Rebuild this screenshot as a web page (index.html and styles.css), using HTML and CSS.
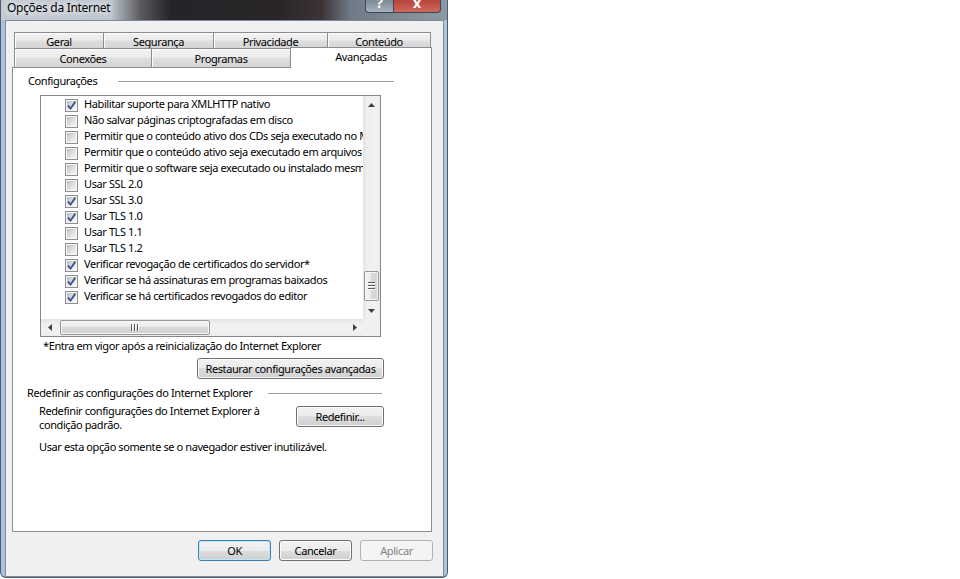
FILE: index.html
```html
<!DOCTYPE html>
<html lang="pt-BR">
<head>
    <meta charset="UTF-8">
    <title>Opções da Internet</title>
    <link rel="stylesheet" href="styles.css">
</head>
<body>
    <div class="window">
        <div class="titlebar">
            <span class="title">Opções da Internet</span>
            <div class="caption">
                <span class="cap-btn help">?</span>
                <span class="cap-btn close">x</span>
            </div>
        </div>
        <div class="client">
            <div class="tab-row back">
                <div class="tab t-geral">Geral</div>
                <div class="tab t-seg">Segurança</div>
                <div class="tab t-priv">Privacidade</div>
                <div class="tab t-cont">Conteúdo</div>
            </div>
            <div class="tab-row front">
                <div class="tab t-conex">Conexões</div>
                <div class="tab t-prog">Programas</div>
                <div class="tab t-avanc selected">Avançadas</div>
            </div>
            <div class="panel">
                <div class="group-head first">
                    <span class="group-label">Configurações</span>
                    <span class="rule"></span>
                </div>
                <div class="listbox">
                    <div class="list-items">
                        <div class="item"><span class="cb"><svg width="11" height="11" viewBox="0 0 11 11"><path d="M2 5.5 L4.5 8.5 L9.5 1.5" fill="none" stroke="#3b5089" stroke-width="1.8"/></svg></span>Habilitar suporte para XMLHTTP nativo</div>
                        <div class="item"><span class="cb"></span>Não salvar páginas criptografadas em disco</div>
                        <div class="item"><span class="cb"></span>Permitir que o conteúdo ativo dos CDs seja executado no Meu Computador*</div>
                        <div class="item"><span class="cb"></span>Permitir que o conteúdo ativo seja executado em arquivos do Meu Computador*</div>
                        <div class="item"><span class="cb"></span>Permitir que o software seja executado ou instalado mesmo se a assinatura for inválida</div>
                        <div class="item"><span class="cb"></span>Usar SSL 2.0</div>
                        <div class="item"><span class="cb"><svg width="11" height="11" viewBox="0 0 11 11"><path d="M2 5.5 L4.5 8.5 L9.5 1.5" fill="none" stroke="#3b5089" stroke-width="1.8"/></svg></span>Usar SSL 3.0</div>
                        <div class="item"><span class="cb"><svg width="11" height="11" viewBox="0 0 11 11"><path d="M2 5.5 L4.5 8.5 L9.5 1.5" fill="none" stroke="#3b5089" stroke-width="1.8"/></svg></span>Usar TLS 1.0</div>
                        <div class="item"><span class="cb"></span>Usar TLS 1.1</div>
                        <div class="item"><span class="cb"></span>Usar TLS 1.2</div>
                        <div class="item"><span class="cb"><svg width="11" height="11" viewBox="0 0 11 11"><path d="M2 5.5 L4.5 8.5 L9.5 1.5" fill="none" stroke="#3b5089" stroke-width="1.8"/></svg></span>Verificar revogação de certificados do servidor*</div>
                        <div class="item"><span class="cb"><svg width="11" height="11" viewBox="0 0 11 11"><path d="M2 5.5 L4.5 8.5 L9.5 1.5" fill="none" stroke="#3b5089" stroke-width="1.8"/></svg></span>Verificar se há assinaturas em programas baixados</div>
                        <div class="item"><span class="cb"><svg width="11" height="11" viewBox="0 0 11 11"><path d="M2 5.5 L4.5 8.5 L9.5 1.5" fill="none" stroke="#3b5089" stroke-width="1.8"/></svg></span>Verificar se há certificados revogados do editor</div>
                    </div>
                    <div class="vscroll">
                        <div class="arrow-btn"><svg width="7" height="4" viewBox="0 0 7 4"><path d="M3.5 0 L7 4 H0 Z" fill="#404040"/></svg></div>
                        <div class="vtrack">
                            <div class="vthumb">
                                <svg width="7" height="8" viewBox="0 0 7 8"><path d="M0 0.5 H7 M0 3.5 H7 M0 6.5 H7" stroke="#5a5a5a"/><path d="M0 1.5 H7 M0 4.5 H7 M0 7.5 H7" stroke="#ffffff"/></svg>
                            </div>
                        </div>
                        <div class="arrow-btn"><svg width="7" height="4" viewBox="0 0 7 4"><path d="M0 0 H7 L3.5 4 Z" fill="#404040"/></svg></div>
                    </div>
                    <div class="hscroll">
                        <div class="arrow-btn"><svg width="4" height="7" viewBox="0 0 4 7"><path d="M0 3.5 L4 0 V7 Z" fill="#404040"/></svg></div>
                        <div class="htrack">
                            <div class="hthumb">
                                <svg width="8" height="7" viewBox="0 0 8 7"><path d="M0.5 0 V7 M3.5 0 V7 M6.5 0 V7" stroke="#5a5a5a"/><path d="M1.5 0 V7 M4.5 0 V7 M7.5 0 V7" stroke="#ffffff"/></svg>
                            </div>
                        </div>
                        <div class="arrow-btn"><svg width="4" height="7" viewBox="0 0 4 7"><path d="M0 0 L4 3.5 L0 7 Z" fill="#404040"/></svg></div>
                    </div>
                    <div class="corner"></div>
                </div>
                <p class="note">*Entra em vigor após a reinicialização do Internet Explorer</p>
                <button class="btn restore">Restaurar configurações avançadas</button>
                <div class="group-head second">
                    <span class="group-label">Redefinir as configurações do Internet Explorer</span>
                    <span class="rule"></span>
                </div>
                <div class="reset-row">
                    <p class="reset-text">Redefinir configurações do Internet Explorer à<br>condição padrão.</p>
                    <button class="btn reset">Redefinir...</button>
                </div>
                <p class="hint">Usar esta opção somente se o navegador estiver inutilizável.</p>
            </div>
            <div class="dialog-buttons">
                <button class="btn default">OK</button>
                <button class="btn">Cancelar</button>
                <button class="btn" disabled>Aplicar</button>
            </div>
        </div>
    </div>
</body>
</html>
```

FILE: styles.css
```css
body {
    margin: 0;
    background: #fff;
    font-family: "Noto Sans", sans-serif;
    font-size: 11px;
    letter-spacing: -0.4px;
    color: #000;
}

/* window frame */
.window {
    width: 448px;
    height: 578px;
    box-sizing: border-box;
    border: 1px solid #4d5c70;
    border-top: none;
    border-radius: 0 0 6px 6px;
    background: linear-gradient(to right, #a9c2dd, #c3d5ea 50%, #aec5de);
    display: flex;
    flex-direction: column;
}
.titlebar {
    height: 20px;
    display: flex;
    justify-content: space-between;
    background: linear-gradient(to right, #c3cad2 0, #bcc4cc 110px, #5a5a5e 140px, #242428 170px, #2a2628 280px, #3b3335 320px, #6f7a86 350px, #8d99a5 446px);
}
.title {
    padding: 1px 0 0 6px;
    line-height: 14px;
    font-size: 12px;
    letter-spacing: -0.3px;
    text-shadow: 0 0 6px #fff, 0 0 10px #fff;
}
.caption {
    display: flex;
    margin-right: 6px;
}
.cap-btn {
    height: 13px;
    box-sizing: border-box;
    border: 1px solid #3d4652;
    border-top: none;
    overflow: hidden;
    color: #fff;
    font-weight: bold;
    font-size: 14px;
    line-height: 6px;
    text-align: center;
    letter-spacing: 0;
}
.help {
    width: 29px;
    border-radius: 0 0 0 4px;
    background: linear-gradient(#7d8995, #a8b2bc);
}
.close {
    width: 47px;
    border-left: none;
    border-radius: 0 0 4px 0;
    background: linear-gradient(#b5443b, #d0685c);
}

.client {
    flex: 1;
    margin: 0 3px 0 4px;
    border: 1px solid #7f8c9c;
    background: #f0f0f0;
    padding-top: 11px;
}

/* tabs */
.tab-row {
    display: flex;
    margin-left: 8px;
}
.tab-row.back {
    height: 16px;
}
.tab-row.front {
    height: 19px;
}
.tab {
    box-sizing: border-box;
    border: 1px solid #898c95;
    border-bottom: none;
    margin-left: -1px;
    background: linear-gradient(#f3f3f3, #ebebeb 45%, #dedede 55%, #d4d4d4);
    box-shadow: inset 1px 1px 0 #fcfcfc;
    text-align: center;
}
.tab:first-child {
    margin-left: 0;
}
.back .tab {
    height: 16px;
    line-height: 16px;
    padding-top: 1px;
}
.front .tab {
    height: 19px;
    line-height: 16px;
    padding-top: 2px;
}
.front .tab.selected {
    height: 21px;
    margin-top: -1px;
    margin-bottom: -1px;
    background: #fff;
    box-shadow: none;
    padding-top: 1px;
    position: relative;
    z-index: 1;
}
.t-geral { width: 90px; }
.t-seg { width: 111px; }
.t-priv { width: 115px; }
.t-cont { width: 104px; }
.t-conex { width: 138px; }
.t-prog { width: 140px; }
.t-avanc { width: 142px; }

.panel {
    margin-left: 6px;
    width: 420px;
    height: 465px;
    box-sizing: border-box;
    border: 1px solid #898c95;
    background: #fff;
}

.group-head {
    display: flex;
    align-items: center;
    height: 14px;
    line-height: 14px;
}
.group-head.first {
    margin: 6px 0 0 15px;
}
.group-head.first .group-label { width: 90px; }
.group-head.first .rule { width: 276px; }
.group-head.second {
    margin: 7px 0 0 14px;
}
.group-head.second .group-label { width: 241px; }
.group-head.second .rule { width: 114px; }
.group-label {
    white-space: nowrap;
}
.rule {
    height: 1px;
    background: #a0a0a0;
}

/* list with scrollbars */
.listbox {
    margin: 7px 0 0 27px;
    width: 341px;
    height: 242px;
    box-sizing: border-box;
    border: 1px solid #828790;
    display: grid;
    grid-template-columns: 322px 17px;
    grid-template-rows: 223px 17px;
}
.list-items {
    overflow: hidden;
}
.item {
    height: 16px;
    line-height: 16px;
    display: flex;
    align-items: center;
    padding-left: 24px;
    white-space: nowrap;
}
.cb {
    width: 13px;
    height: 13px;
    flex-shrink: 0;
    box-sizing: border-box;
    margin: 2px 6px 0 0;
    padding: 1px;
    border: 1px solid #8e8f8f;
    background: linear-gradient(135deg, #b7bcc3, #e4e6e8 60%, #f5f5f6) content-box, #f6f6f6;
    display: grid;
    place-items: center;
}
.cb svg {
    margin: -1px;
}

.vscroll {
    display: grid;
    grid-template-rows: 17px 1fr 17px;
    background: linear-gradient(to right, #e3e3e3, #efefef 25%, #f2f2f2 70%, #ebebeb);
}
.hscroll {
    display: grid;
    grid-template-columns: 17px 1fr 17px;
    background: linear-gradient(#e3e3e3, #efefef 25%, #f2f2f2 70%, #ebebeb);
}
.arrow-btn {
    display: grid;
    place-items: center;
}
.vtrack {
    display: flex;
    flex-direction: column;
    justify-content: flex-end;
    padding-bottom: 1px;
}
.vthumb {
    height: 30px;
    margin: 0 1px;
    box-sizing: border-box;
    border: 1px solid #979797;
    border-radius: 2px;
    background: linear-gradient(to right, #f4f4f4, #e9e9e9 50%, #d9d9d9 50%, #d2d2d2);
    box-shadow: inset 0 0 0 1px #f8f8f8;
    display: grid;
    place-items: center;
}
.htrack {
    display: flex;
    align-items: stretch;
    padding-left: 2px;
}
.hthumb {
    width: 150px;
    margin: 1px 0;
    box-sizing: border-box;
    border: 1px solid #979797;
    border-radius: 2px;
    background: linear-gradient(#f4f4f4, #e9e9e9 50%, #d9d9d9 50%, #d2d2d2);
    box-shadow: inset 0 0 0 1px #f8f8f8;
    display: grid;
    place-items: center;
}
.corner {
    background: #f0f0f0;
}

p {
    margin: 0;
    line-height: 14px;
}
.note {
    margin: 2px 0 0 30px;
}
.hint {
    margin: 8px 0 0 26px;
}
.reset-row {
    display: flex;
    align-items: flex-start;
    margin: 4px 0 0 26px;
}
.reset-text {
    width: 257px;
    white-space: nowrap;
}

/* buttons */
.btn {
    height: 21px;
    box-sizing: border-box;
    border: 1px solid #707070;
    border-radius: 3px;
    background: linear-gradient(#f2f2f2, #ebebeb 50%, #dddddd 50%, #cfcfcf);
    box-shadow: inset 0 0 0 1px #fbfbfb;
    font-family: inherit;
    font-size: 11px;
    letter-spacing: inherit;
    white-space: nowrap;
    color: #000;
    padding: 0;
    display: block;
}
.btn.restore {
    margin: 5px 0 0 184px;
    width: 187px;
}
.btn.reset {
    margin-top: 2px;
    width: 88px;
}
.btn.default {
    border-color: #3c7fb1;
    box-shadow: inset 0 0 0 1px #bde6fa;
}
.btn:disabled {
    border-color: #adb2b5;
    background: #f4f4f4;
    box-shadow: none;
    color: #838383;
}
.dialog-buttons {
    display: flex;
    justify-content: flex-end;
    gap: 8px;
    margin-top: 8px;
    padding-right: 10px;
}
.dialog-buttons .btn {
    width: 73px;
}
```
